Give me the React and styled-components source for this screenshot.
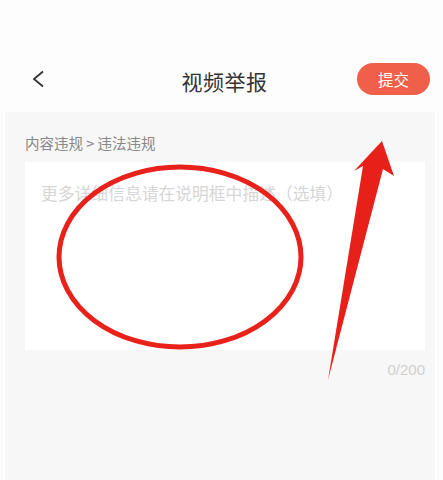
import React from 'react';
import styled, { createGlobalStyle } from 'styled-components';

const GlobalStyle = createGlobalStyle`
  body {
    margin: 0;
    background: #fdfdfd;
    font-family: "Noto Sans CJK SC", "Noto Sans", sans-serif;
  }
`;

const Page = styled.div`
  position: relative;
  width: 443px;
  height: 480px;
  overflow: hidden;
`;

const NavBar = styled.div`
  display: grid;
  grid-template-columns: 1fr auto 1fr;
  align-items: center;
  height: 62px;
  margin-top: 48px;
`;

const BackButton = styled.div`
  display: flex;
  align-items: center;
  padding-left: 31px;
  color: #333;
`;

const Title = styled.h1`
  margin: 4px 0 0 6px;
  font-size: 21px;
  font-weight: 400;
  color: #333;
  letter-spacing: 0.5px;
`;

const SubmitButton = styled.button`
  justify-self: end;
  margin-right: 13px;
  width: 73px;
  height: 32px;
  border: none;
  border-radius: 16px;
  background: #ef5f4a;
  color: #fff;
  font-family: inherit;
  font-size: 15.5px;
`;

const Panel = styled.div`
  margin: 2px 8px 0 5px;
  padding: 21px 10px 0 20px;
  background: #f7f7f7;
  height: 370px;
  box-sizing: border-box;
`;

const Breadcrumb = styled.div`
  font-size: 14.5px;
  line-height: 20px;
  color: #888;
`;

const Field = styled.textarea`
  display: block;
  width: 100%;
  height: 188px;
  margin-top: 9px;
  padding: 20px 16px;
  box-sizing: border-box;
  border: none;
  background: #fff;
  resize: none;
  font-family: inherit;
  font-size: 16.8px;
  line-height: 22px;
  outline: none;

  &::placeholder {
    color: #d6d6d6;
  }
`;

const Counter = styled.div`
  margin-top: 10px;
  text-align: right;
  font-family: "Liberation Sans", Arial, sans-serif;
  font-size: 15px;
  line-height: 20px;
  color: #d0d0d0;
`;

const Markup = styled.svg`
  position: absolute;
  top: 0;
  left: 0;
  pointer-events: none;
`;

export default function App() {
  return (
    <Page>
      <GlobalStyle />
      <NavBar>
        <BackButton>
          <svg width="14" height="18" viewBox="0 0 14 18">
            <polyline points="12,1.5 3,9 12,16.5" fill="none" stroke="#333" strokeWidth="1.8" />
          </svg>
        </BackButton>
        <Title>视频举报</Title>
        <SubmitButton>提交</SubmitButton>
      </NavBar>
      <Panel>
        <Breadcrumb>内容违规 &gt; 违法违规</Breadcrumb>
        <Field placeholder="更多详细信息请在说明框中描述（选填）" />
        <Counter>0/200</Counter>
      </Panel>
      <Markup width="443" height="480" viewBox="0 0 443 480">
        <ellipse cx="180" cy="257" rx="121" ry="90" fill="none" stroke="#e8221b" strokeWidth="5" />
        <polygon
          points="382,141 394,176 383,169 328,380 363,166 354,171"
          fill="#e8201a"
        />
      </Markup>
    </Page>
  );
}
